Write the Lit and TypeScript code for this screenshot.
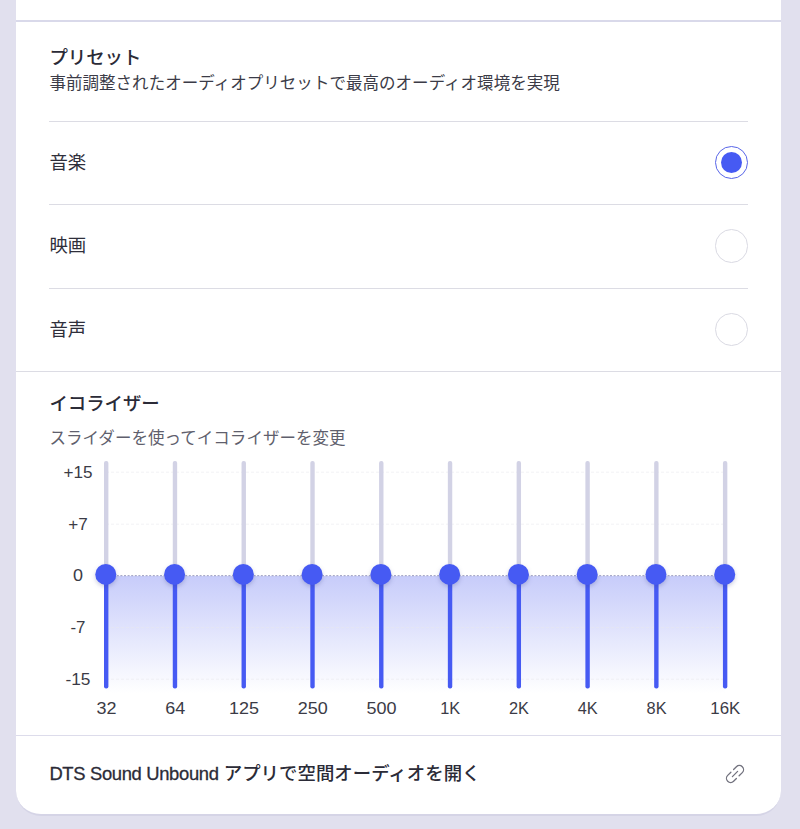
import { LitElement, html, svg, css } from "lit";
import { customElement, property, state } from "lit/decorators.js";
import { classMap } from "lit/directives/class-map.js";

@customElement("preset-row")
class PresetRow extends LitElement {
  @property() label = "";
  @property({ type: Boolean }) selected = false;

  static styles = css`
    :host { display: block; }
    .row {
      box-sizing: border-box;
      height: 83.5px;
      padding-bottom: 0.4px;
      border-top: 1px solid #dcdce4;
      display: flex;
      align-items: center;
      justify-content: space-between;
      font-size: 18.4px;
      line-height: 26px;
      color: #2f2f3b;
    }
    .radio {
      box-sizing: border-box;
      width: 33.4px;
      height: 33.4px;
      border: 1px solid #dadae3;
      border-radius: 50%;
      display: grid;
      place-items: center;
    }
    .radio.on { border-color: #5865e8; }
    .dot { width: 21px; height: 21px; border-radius: 50%; background: #465af3; }
  `;

  render() {
    return html`<div class="row">
      <span>${this.label}</span>
      <span class=${classMap({ radio: true, on: this.selected })}>
        ${this.selected ? html`<span class="dot"></span>` : null}
      </span>
    </div>`;
  }
}

@customElement("equalizer-chart")
class EqualizerChart extends LitElement {
  static styles = css`
    :host { display: block; }
    svg { display: block; overflow: visible; }
    text {
      font-family: "Liberation Sans", Arial, sans-serif;
      font-size: 16.5px;
      fill: #3b3b46;
      text-anchor: middle;
    }
    .grid { stroke: #e9e9ef; stroke-opacity: 0.6; stroke-width: 1; stroke-dasharray: 3 2; }
    .zero { stroke: #a9aac9; stroke-width: 1.2; stroke-dasharray: 2 1.6; }
    .track { fill: #d2d2e5; }
    .level { fill: #465af3; }
    .thumb { fill: #465af3; filter: drop-shadow(0 2px 2px rgb(50 60 130 / 0.25)); }
  `;

  private bands = [
    ["32", 20], ["64", 20], ["125", 30], ["250", 30], ["500", 30],
    ["1K", 20], ["2K", 20], ["4K", 20], ["8K", 20], ["16K", 30],
  ] as [string, number][];

  private scale = [
    { label: "+15", x: 29.1, y: 22, w: 29 },
    { label: "+7", x: 29.1, y: 74, w: 19.5 },
    { label: "0", x: 29.1, y: 125.5, w: 10 },
    { label: "-7", x: 28.9, y: 177.5, w: 15 },
    { label: "-15", x: 28.9, y: 229, w: 25 },
  ];

  render() {
    return html`<svg width="699" height="285" viewBox="0 0 699 285">
      <defs>
        <linearGradient id="fade" x1="0" y1="0" x2="0" y2="1">
          <stop offset="0" stop-color="#c7ccfa" />
          <stop offset="1" stop-color="#ffffff" />
        </linearGradient>
      </defs>
      <rect x="57" y="126" width="619" height="117" fill="url(#fade)" />
      ${this.scale.map((s) => svg`
        <line class=${s.label === "0" ? "zero" : "grid"} x1="57" x2="676" y1=${s.y + 0.2} y2=${s.y + 0.2} />
        <text x=${s.x} y=${s.y + 5.8} textLength=${s.w} lengthAdjust="spacingAndGlyphs">${s.label}</text>`)}
      ${this.bands.map(([label, w], i) => {
        const x = 57.2 + i * 68.77;
        return svg`
          <rect class="track" x=${x - 2.2} y="11" width="4.4" height="120" rx="2" />
          <rect class="level" x=${x - 2.2} y="125" width="4.4" height="113.5" rx="2" />
          <circle class="thumb" cx=${x - 0.4} cy="124.4" r="10.5" />
          <text x=${x + 0.2} y="264" textLength=${w} lengthAdjust="spacingAndGlyphs">${label}</text>`;
      })}
    </svg>`;
  }
}

@customElement("app-root")
class AppRoot extends LitElement {
  @state() private selected = "音楽";

  static styles = css`
    :host {
      display: block;
      box-sizing: border-box;
      height: 829px;
      padding: 0 19px 0 16.4px;
      background: #e1e0ee;
      font-family: "Liberation Sans", "Noto Sans CJK JP", sans-serif;
      color: #2b2b37;
    }
    .card {
      box-sizing: border-box;
      height: 816px;
      overflow: hidden;
      background: #fff;
      border-bottom: 2px solid #d5d4e6;
      border-radius: 0 0 25px 25px;
    }
    .previous { height: 19.6px; border-bottom: 2px solid #d9d9ea; }
    .presets { box-sizing: border-box; height: 349.4px; padding: 22.4px 33px 0; }
    h2 { margin: 0; font-size: 18.4px; line-height: 27px; font-weight: 500; }
    p { margin: 0; font-size: 16.5px; letter-spacing: 0.04px; line-height: 24px; white-space: nowrap; }
    .presets p { color: #3b3b47; margin-bottom: 25.6px; }
    .equalizer {
      box-sizing: border-box;
      height: 364px;
      padding: 18px 33px 0;
      border-top: 1px solid #dcdce4;
    }
    .equalizer p { color: #5f5f6d; margin: 9px 0 0; }
    .link {
      box-sizing: border-box;
      height: 79px;
      padding: 0 33px 2px;
      border-top: 1px solid #dddceb;
      display: flex;
      align-items: center;
      justify-content: space-between;
      font-size: 18.4px;
      font-weight: 500;
    }
    .label { padding-bottom: 3px; letter-spacing: 0.04px; }
    .latin { letter-spacing: -0.33px; -webkit-text-stroke: 0.3px #2b2b37; }
    .chain { margin-right: 3px; }
  `;

  render() {
    return html`<div class="card">
      <div class="previous"></div>
      <section class="presets">
        <h2>プリセット</h2>
        <p>事前調整されたオーディオプリセットで最高のオーディオ環境を実現</p>
        ${["音楽", "映画", "音声"].map((name) => html`
          <preset-row .label=${name} .selected=${name === this.selected}
            @click=${() => (this.selected = name)}></preset-row>`)}
      </section>
      <section class="equalizer">
        <h2>イコライザー</h2>
        <p>スライダーを使ってイコライザーを変更</p>
        <equalizer-chart></equalizer-chart>
      </section>
      <div class="link">
        <span class="label"><span class="latin">DTS Sound Unbound</span> アプリで空間オーディオを開く</span>
        <svg class="chain" width="20" height="20" viewBox="0 0 20 20" fill="none"
          stroke="#73737f" stroke-width="1.3" stroke-linecap="round">
          <path d="M8.6 5.5 L11.4 2.7 A4 4 0 0 1 17.3 8.6 L14.1 11.8" />
          <path d="M11.4 14.5 L8.6 17.3 A4 4 0 0 1 2.7 11.4 L5.9 8.2" />
          <path d="M7.4 12.6 L12.6 7.4" />
        </svg>
      </div>
    </div>`;
  }
}
